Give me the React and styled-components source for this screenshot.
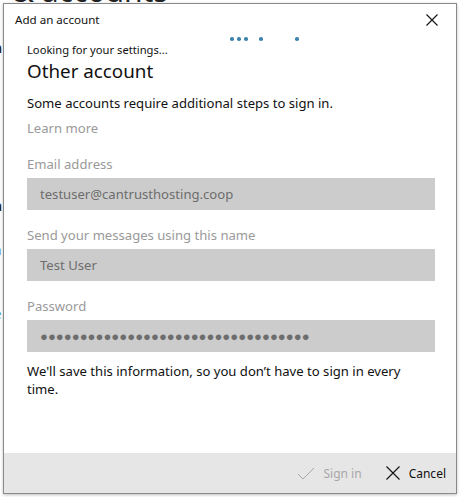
import React from 'react'
import styled, { createGlobalStyle } from 'styled-components'

const GlobalStyle = createGlobalStyle`
  html, body {
    margin: 0;
    padding: 0;
    background: #fff;
  }
  body {
    font-family: "Noto Sans", "Open Sans", sans-serif;
  }
`;

const Screen = styled.div`
  position: relative;
  width: 460px;
  height: 497px;
  overflow: hidden;
  background: #fff;
`;

const BehindTitle = styled.div`
  padding-left: 12px;
  height: 3px;
  overflow: hidden;
  font-size: 30px;
  color: #222;
  line-height: 30px;

  span {
    display: block;
    margin-top: -24px;
  }
`;

const BehindText = styled.div`
  display: flex;
  flex-direction: column;
  font-size: 15px;
  line-height: 16px;
  color: #111;
  margin-left: -7px;
`;

const Fragment = styled.span`
  margin-top: ${({ gap }) => gap}px;
  color: ${({ link }) => (link ? '#3d8ab5' : '#111')};
`;

const Dialog = styled.div`
  position: absolute;
  z-index: 2;
  left: 3px;
  top: 3px;
  width: 452px;
  height: 489px;
  background: #fff;
  border: 1px solid #8a8a8a;
  box-shadow: 0 1px 3px rgba(0, 0, 0, 0.25);
  display: flex;
  flex-direction: column;
`;

const TitleBar = styled.div`
  display: flex;
  align-items: center;
  justify-content: space-between;
  height: 30px;
  padding: 0 12px 0 11px;
  font-size: 11.6px;
  color: #111;
`;

const CloseBtn = styled.div`
  width: 24px;
  height: 24px;
  display: flex;
  align-items: center;
  justify-content: center;
  margin-top: 1px;
`;

const Body = styled.div`
  flex: 1;
  position: relative;
  padding: 5px 20px 0 23px;
  display: flex;
  flex-direction: column;
`;

const Dots = styled.div`
  position: absolute;
  top: 3px;
  left: 226px;
  width: 80px;
  height: 4px;
`;

const Dot = styled.span`
  position: absolute;
  top: 0;
  width: 3.5px;
  height: 3.5px;
  border-radius: 50%;
  background: #3f84ad;
`;

const Status = styled.div`
  font-size: 11.2px;
  line-height: 16px;
  color: #111;
  margin-top: 3px;
`;

const Heading = styled.div`
  font-size: 18.8px;
  line-height: 24px;
  color: #111;
  margin-top: 1px;
`;

const Text = styled.div`
  font-size: 13.1px;
  line-height: 19px;
  color: ${({ muted }) => (muted ? '#9a9a9a' : '#111')};
  margin-top: ${({ gap }) => gap || 0}px;
`;

const Field = styled.div`
  display: flex;
  flex-direction: column;
  margin-top: ${({ gap }) => gap}px;
`;

const Label = styled.div`
  font-size: 13.1px;
  line-height: 19px;
  color: #9a9a9a;
  margin-bottom: 4px;
`;

const Input = styled.div`
  height: 32px;
  width: 408px;
  background: #cccccc;
  display: flex;
  align-items: center;
  padding-left: 13px;
  box-sizing: border-box;
  font-size: 13.1px;
  color: #6d6d6d;
  letter-spacing: ${({ secret }) => (secret ? '0.02px' : '0')};
`;

const Note = styled.div`
  font-size: 13.1px;
  line-height: 18px;
  color: #111;
  margin-top: 10px;
  width: 400px;
`;

const Footer = styled.div`
  height: 40px;
  background: #e6e6e6;
  display: flex;
  align-items: center;
  justify-content: flex-end;
  gap: 24px;
  padding-right: 10px;
`;

const FooterBtn = styled.div`
  display: flex;
  align-items: center;
  gap: 9px;
  font-size: 12px;
  color: ${({ disabled }) => (disabled ? '#a8a8a8' : '#111')};
`;

const dots = [0, 7, 14, 29, 65]

const App = () =>
{
  return (
    <Screen>
      <GlobalStyle />
      <BehindTitle><span>&amp; accounts</span></BehindTitle>
      <BehindText>
        <Fragment gap={ 36 }>n</Fragment>
        <Fragment gap={ 40 }>c</Fragment>
        <Fragment gap={ 86 }>n</Fragment>
        <Fragment gap={ 28 }>a</Fragment>
        <Fragment gap={ 48 } link>e</Fragment>
      </BehindText>
      <Dialog>
        <TitleBar>
          <span>Add an account</span>
          <CloseBtn>
            <svg width="12" height="12" viewBox="0 0 12 12">
              <path d="M0.5 0.5 L11.5 11.5 M11.5 0.5 L0.5 11.5" stroke="#111" strokeWidth="1.1" />
            </svg>
          </CloseBtn>
        </TitleBar>
        <Body>
          <Dots>
            { dots.map( ( x ) => <Dot key={ x } style={ { left: x } } /> ) }
          </Dots>
          <Status>Looking for your settings...</Status>
          <Heading>Other account</Heading>
          <Text gap={ 11 }>Some accounts require additional steps to sign in.</Text>
          <Text muted gap={ 6 }>Learn more</Text>
          <Field gap={ 17 }>
            <Label>Email address</Label>
            <Input>testuser@cantrusthosting.coop</Input>
          </Field>
          <Field gap={ 16 }>
            <Label>Send your messages using this name</Label>
            <Input>Test User</Input>
          </Field>
          <Field gap={ 16 }>
            <Label>Password</Label>
            <Input secret>●●●●●●●●●●●●●●●●●●●●●●●●●●●●●●●●●●</Input>
          </Field>
          <Note>We'll save this information, so you don’t have to sign in every time.</Note>
        </Body>
        <Footer>
          <FooterBtn disabled>
            <svg width="18" height="13" viewBox="0 0 18 13">
              <path d="M1 7 L6 12 L17 1" fill="none" stroke="#a8a8a8" strokeWidth="1" />
            </svg>
            Sign in
          </FooterBtn>
          <FooterBtn>
            <svg width="14" height="14" viewBox="0 0 14 14">
              <path d="M0.5 0.5 L13.5 13.5 M13.5 0.5 L0.5 13.5" stroke="#111" strokeWidth="1.1" />
            </svg>
            Cancel
          </FooterBtn>
        </Footer>
      </Dialog>
    </Screen>
  )
}

export default App
